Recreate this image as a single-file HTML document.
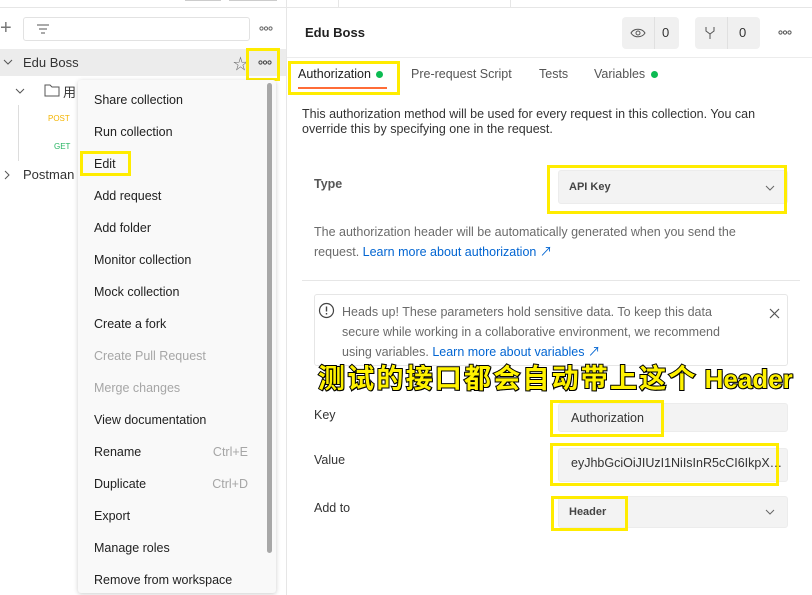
<!DOCTYPE html>
<html><head><meta charset="utf-8"><style>
*{margin:0;padding:0;box-sizing:border-box}
body{width:812px;height:595px;overflow:hidden;background:#fff;font-family:"Liberation Sans","Noto Sans CJK SC",sans-serif;font-size:12.5px;color:#212121;position:relative}
.a{position:absolute}
.yb{position:absolute;border:3px solid #ffec00}
.mi{position:absolute;left:94px;font-size:12.5px;color:#212121}
.gr{color:#a6a6a6}
.sc{position:absolute;right:0;color:#a6a6a6}
.lbl{position:absolute;left:314px;font-size:12.5px;color:#333}
.inp{position:absolute;left:558px;width:230px;background:#f3f3f3;border:1px solid #ececec;border-radius:3px}
</style></head><body>
<div class="a" style="left:0;top:0;width:812px;height:8px;border-bottom:1px solid #e6e6e6"></div>
<div class="a" style="left:185px;top:0;width:36px;height:1px;background:#ccc"></div>
<div class="a" style="left:229px;top:0;width:48px;height:1px;background:#ccc"></div>
<div class="a" style="left:286px;top:0;width:1px;height:595px;background:#e6e6e6"></div>
<div class="a" style="left:338px;top:0;width:1px;height:8px;background:#e6e6e6"></div>
<div class="a" style="left:510px;top:0;width:1px;height:8px;background:#e6e6e6"></div>
<div class="a" style="left:0;top:20px;font-size:20px;color:#777;line-height:16px">+</div>
<div class="a" style="left:23px;top:17px;width:227px;height:24px;border:1px solid #e2e2e2;border-radius:3px"></div>
<svg class="a" style="left:36px;top:23px" width="14" height="12"><path d="M1 2h12M3 6h8M5 10h4" stroke="#777" stroke-width="1.2"/></svg>
<svg class="a" style="left:259px;top:26px" width="14" height="5"><circle cx="2.5" cy="2.5" r="1.6" fill="none" stroke="#666"/><circle cx="7" cy="2.5" r="1.6" fill="none" stroke="#666"/><circle cx="11.5" cy="2.5" r="1.6" fill="none" stroke="#666"/></svg>
<div class="a" style="left:0;top:49px;width:286px;height:27px;background:#ececec"></div>
<svg class="a" style="left:3px;top:58px" width="10" height="8"><path d="M1 2l4 4 4-4" stroke="#555" fill="none"/></svg>
<div class="a" style="left:23px;top:55px;font-size:13px;color:#333">Edu Boss</div>
<div class="a" style="left:233px;top:53px;font-size:15px;color:#666">☆</div>
<div class="yb" style="left:246px;top:48px;width:34px;height:33px"></div>
<svg class="a" style="left:258px;top:60px" width="14" height="5"><circle cx="2.5" cy="2.5" r="1.6" fill="none" stroke="#444"/><circle cx="7" cy="2.5" r="1.6" fill="none" stroke="#444"/><circle cx="11.5" cy="2.5" r="1.6" fill="none" stroke="#444"/></svg>
<svg class="a" style="left:15px;top:87px" width="10" height="8"><path d="M1 2l4 4 4-4" stroke="#555" fill="none"/></svg>
<svg class="a" style="left:44px;top:83px" width="16" height="14"><path d="M1 2h5l2 2h7v9H1z" stroke="#555" fill="none"/></svg>
<div class="a" style="left:63px;top:82px;font-size:13px;color:#333">用</div>
<div class="a" style="left:18px;top:105px;width:1px;height:56px;background:#ddd"></div>
<div class="a" style="left:48px;top:114px;font-size:8px;color:#f4b400">POST</div>
<div class="a" style="left:54px;top:142px;font-size:8px;color:#28b463">GET</div>
<svg class="a" style="left:3px;top:170px" width="8" height="10"><path d="M2 1l4 4-4 4" stroke="#555" fill="none"/></svg>
<div class="a" style="left:23px;top:167px;font-size:13px;color:#333">Postman</div>
<div class="a" style="left:78px;top:80px;width:198px;height:513px;background:#f9f9f9;border-radius:3px;box-shadow:0 1px 5px rgba(0,0,0,.2)"></div>
<div class="a" style="left:267px;top:83px;width:5px;height:470px;background:#a8a8a8;border-radius:3px"></div>
<div class="mi" style="top:93px">Share collection</div>
<div class="mi" style="top:125px">Run collection</div>
<div class="yb" style="left:80px;top:151px;width:51px;height:25px"></div>
<div class="mi" style="top:157px">Edit</div>
<div class="mi" style="top:189px">Add request</div>
<div class="mi" style="top:221px">Add folder</div>
<div class="mi" style="top:253px">Monitor collection</div>
<div class="mi" style="top:285px">Mock collection</div>
<div class="mi" style="top:317px">Create a fork</div>
<div class="mi gr" style="top:349px">Create Pull Request</div>
<div class="mi gr" style="top:381px">Merge changes</div>
<div class="mi" style="top:413px">View documentation</div>
<div class="mi" style="top:445px;width:154px">Rename<span class="sc">Ctrl+E</span></div>
<div class="mi" style="top:477px;width:154px">Duplicate<span class="sc">Ctrl+D</span></div>
<div class="mi" style="top:509px">Export</div>
<div class="mi" style="top:541px">Manage roles</div>
<div class="mi" style="top:573px">Remove from workspace</div>
<div class="a" style="left:305px;top:25px;font-size:13px;font-weight:bold;color:#212121">Edu Boss</div>
<div class="a" style="left:622px;top:17px;width:57px;height:32px;background:#f0f0f0;border-radius:4px"></div>
<div class="a" style="left:654px;top:17px;width:1px;height:32px;background:#e0e0e0"></div>
<svg class="a" style="left:630px;top:27px" width="16" height="12"><path d="M1 6C4 1 12 1 15 6C12 11 4 11 1 6z" stroke="#555" fill="none"/><circle cx="8" cy="6" r="2" stroke="#555" fill="none"/></svg>
<div class="a" style="left:662px;top:25px;font-size:13px;color:#333">0</div>
<div class="a" style="left:695px;top:17px;width:65px;height:32px;background:#f0f0f0;border-radius:4px"></div>
<div class="a" style="left:727px;top:17px;width:1px;height:32px;background:#e0e0e0"></div>
<svg class="a" style="left:704px;top:26px" width="12" height="14"><path d="M2 1v4l4 3 4-3V1M6 8v5" stroke="#555" fill="none"/></svg>
<div class="a" style="left:739px;top:25px;font-size:13px;color:#333">0</div>
<svg class="a" style="left:778px;top:30px" width="14" height="5"><circle cx="2.5" cy="2.5" r="1.6" fill="none" stroke="#555"/><circle cx="7" cy="2.5" r="1.6" fill="none" stroke="#555"/><circle cx="11.5" cy="2.5" r="1.6" fill="none" stroke="#555"/></svg>
<div class="a" style="left:287px;top:57px;width:525px;height:1px;background:#ececec"></div>
<div class="yb" style="left:288px;top:61px;width:112px;height:34px"></div>
<div class="a" style="left:298px;top:67px;font-size:12.5px;color:#212121">Authorization <span style="display:inline-block;width:7px;height:7px;border-radius:50%;background:#0cbb52;margin-left:2px"></span></div>
<div class="a" style="left:298px;top:87px;width:89px;height:2px;background:#ff6c37"></div>
<div class="a" style="left:411px;top:67px;color:#555">Pre-request Script</div>
<div class="a" style="left:539px;top:67px;color:#555">Tests</div>
<div class="a" style="left:594px;top:67px;color:#555">Variables <span style="display:inline-block;width:7px;height:7px;border-radius:50%;background:#0cbb52;margin-left:2px"></span></div>
<div class="a" style="left:302px;top:107px;width:490px;line-height:15px;color:#333">This authorization method will be used for every request in this collection. You can override this by specifying one in the request.</div>
<div class="a" style="left:314px;top:177px;font-weight:bold;color:#555">Type</div>
<div class="inp" style="top:170px;height:34px"></div>
<div class="yb" style="left:547px;top:165px;width:240px;height:49px"></div>
<div class="a" style="left:569px;top:181px;font-size:11px;font-weight:bold;color:#444">API Key</div>
<svg class="a" style="left:765px;top:185px" width="10" height="6"><path d="M1 1l4 4 4-4" stroke="#666" fill="none"/></svg>
<div class="a" style="left:314px;top:222px;width:470px;line-height:20px;color:#6b6b6b">The authorization header will be automatically generated when you send the request. <span style="color:#0265d2">Learn more about authorization ↗</span></div>
<div class="a" style="left:302px;top:280px;width:498px;height:1px;background:#e6e6e6"></div>
<div class="a" style="left:314px;top:294px;width:474px;height:72px;border:1px solid #e6e6e6;border-radius:3px"></div>
<svg class="a" style="left:318px;top:302px" width="17" height="17"><circle cx="8.5" cy="8.5" r="7" stroke="#444" fill="none" stroke-width="1.2"/><path d="M8.5 4.5v5M8.5 11v1.5" stroke="#444" stroke-width="1.4"/></svg>
<div class="a" style="left:342px;top:302px;width:400px;line-height:20px;color:#6b6b6b">Heads up! These parameters hold sensitive data. To keep this data secure while working in a collaborative environment, we recommend using variables. <span style="color:#0265d2">Learn more about variables ↗</span></div>
<svg class="a" style="left:769px;top:308px" width="11" height="11"><path d="M1 1l9 9M10 1l-9 9" stroke="#555" stroke-width="1.2"/></svg>
<div class="a" style="left:318px;top:360px;font-size:27px;line-height:34px;font-weight:bold;color:#fff200;-webkit-text-stroke:2px #000;paint-order:stroke fill;white-space:nowrap;font-family:'WenQuanYi Zen Hei','Noto Sans CJK SC',sans-serif;letter-spacing:2.2px;text-shadow:1px 1px 0 #000">测试的接口都会自动带上这个<span style="font-family:'Liberation Sans',sans-serif;font-size:26px;letter-spacing:0;margin-left:7px">Header</span></div>
<div class="lbl" style="top:408px">Key</div>
<div class="inp" style="top:403px;height:29px"></div>
<div class="yb" style="left:550px;top:400px;width:114px;height:37px"></div>
<div class="a" style="left:571px;top:411px;color:#333">Authorization</div>
<div class="lbl" style="top:453px">Value</div>
<div class="inp" style="top:448px;height:34px"></div>
<div class="yb" style="left:550px;top:443px;width:229px;height:43px"></div>
<div class="a" style="left:571px;top:456px;color:#333;white-space:nowrap">eyJhbGciOiJIUzI1NiIsInR5cCI6IkpX…</div>
<div class="lbl" style="top:501px">Add to</div>
<div class="inp" style="top:496px;height:32px"></div>
<div class="yb" style="left:551px;top:496px;width:77px;height:35px"></div>
<div class="a" style="left:569px;top:506px;font-size:11px;font-weight:bold;color:#444">Header</div>
<svg class="a" style="left:765px;top:509px" width="10" height="6"><path d="M1 1l4 4 4-4" stroke="#666" fill="none"/></svg>
</body></html>
